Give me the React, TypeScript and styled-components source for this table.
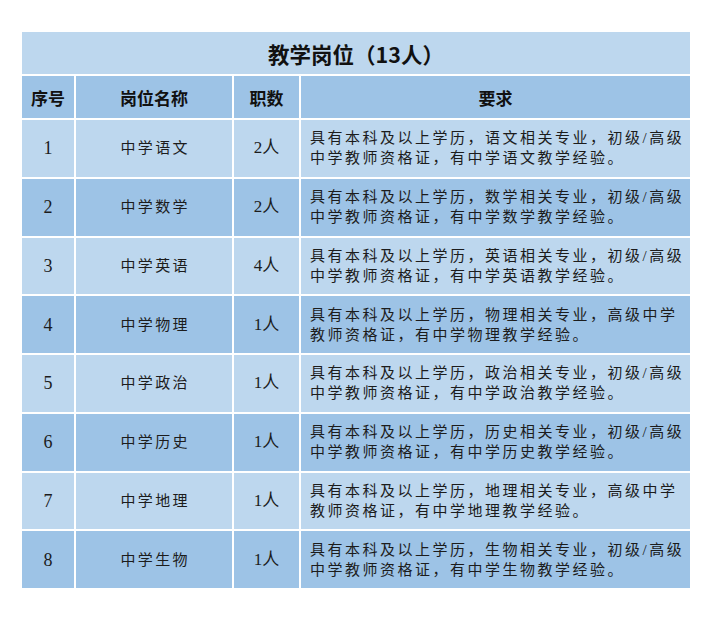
import styled, { createGlobalStyle } from 'styled-components'

const GlobalStyle = createGlobalStyle`
    html, body {
        margin: 0;
        padding: 0;
        background: #ffffff;
    }
`

const LIGHT = '#bdd7ee'
const DARK = '#9dc3e6'

const Page = styled.div`
    padding: 32px 0 0 22px;
`

const Grid = styled.div`
    display: grid;
    width: 668px;
    grid-template-columns: 52px 156px 65px 389px;
    grid-template-rows: 42px 42px repeat(8, 56.75px);
    gap: 2px;
    background: #ffffff;
`

const Title = styled.div`
    grid-column: 1 / -1;
    background: ${LIGHT};
    display: flex;
    align-items: center;
    justify-content: center;
    font-family: 'Noto Sans CJK SC', sans-serif;
    font-weight: 700;
    font-size: 21.5px;
    color: #111;
`

const Head = styled.div`
    background: ${DARK};
    display: flex;
    align-items: center;
    justify-content: center;
    font-family: 'Noto Sans CJK SC', sans-serif;
    font-weight: 700;
    font-size: 17px;
    color: #111;
`

const Cell = styled.div<{ $dark: boolean; $left?: boolean; $size?: number }>`
    background: ${({ $dark }) => ($dark ? DARK : LIGHT)};
    display: flex;
    flex-direction: column;
    align-items: ${({ $left }) => ($left ? 'flex-start' : 'center')};
    justify-content: center;
    padding-left: ${({ $left }) => ($left ? '9px' : '0')};
    font-family: 'Liberation Serif', 'Noto Sans CJK SC', serif;
    font-size: ${({ $size }) => $size ?? 15}px;
    line-height: 20px;
    color: #1c1c1c;
`

const Spaced = styled.span`
    letter-spacing: 2.4px;
    margin-right: -2.4px;
    white-space: nowrap;
`

const Line = styled.span`
    letter-spacing: 2.5px;
    white-space: nowrap;
`

const rows = [
    { no: '1', name: '中学语文', count: '2人', req: ['具有本科及以上学历，语文相关专业，初级/高级', '中学教师资格证，有中学语文教学经验。'] },
    { no: '2', name: '中学数学', count: '2人', req: ['具有本科及以上学历，数学相关专业，初级/高级', '中学教师资格证，有中学数学教学经验。'] },
    { no: '3', name: '中学英语', count: '4人', req: ['具有本科及以上学历，英语相关专业，初级/高级', '中学教师资格证，有中学英语教学经验。'] },
    { no: '4', name: '中学物理', count: '1人', req: ['具有本科及以上学历，物理相关专业，高级中学', '教师资格证，有中学物理教学经验。'] },
    { no: '5', name: '中学政治', count: '1人', req: ['具有本科及以上学历，政治相关专业，初级/高级', '中学教师资格证，有中学政治教学经验。'] },
    { no: '6', name: '中学历史', count: '1人', req: ['具有本科及以上学历，历史相关专业，初级/高级', '中学教师资格证，有中学历史教学经验。'] },
    { no: '7', name: '中学地理', count: '1人', req: ['具有本科及以上学历，地理相关专业，高级中学', '教师资格证，有中学地理教学经验。'] },
    { no: '8', name: '中学生物', count: '1人', req: ['具有本科及以上学历，生物相关专业，初级/高级', '中学教师资格证，有中学生物教学经验。'] },
]

export default function App() {
    return (
        <>
            <GlobalStyle />
            <Page>
                <Grid>
                    <Title>教学岗位（13人）</Title>
                    <Head>序号</Head>
                    <Head>岗位名称</Head>
                    <Head>职数</Head>
                    <Head>要求</Head>
                    {rows.map((r, i) => {
                        const dark = i % 2 === 1
                        return [
                            <Cell key={`n${i}`} $dark={dark} $size={18}>{r.no}</Cell>,
                            <Cell key={`p${i}`} $dark={dark}><Spaced>{r.name}</Spaced></Cell>,
                            <Cell key={`c${i}`} $dark={dark} $size={17}>{r.count}</Cell>,
                            <Cell key={`r${i}`} $dark={dark} $left>
                                {r.req.map((l) => (
                                    <Line key={l}>{l}</Line>
                                ))}
                            </Cell>,
                        ]
                    })}
                </Grid>
            </Page>
        </>
    )
}
